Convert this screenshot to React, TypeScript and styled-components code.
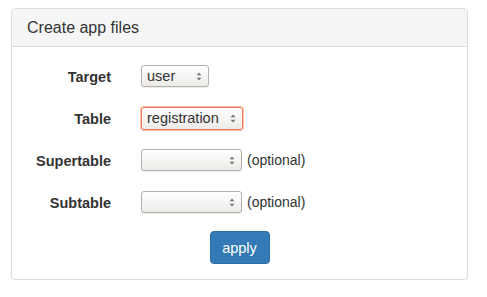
import styled, { createGlobalStyle } from "styled-components";

const GlobalStyle = createGlobalStyle`
  html, body {
    margin: 0;
    padding: 0;
    background: #fff;
  }
  body {
    font-family: "Liberation Sans", Arial, sans-serif;
    font-size: 14px;
    color: #333;
  }
`;

const Page = styled.div`
  padding: 8px 19px 0 11px;
`;

const Panel = styled.div`
  width: 457px;
  box-sizing: border-box;
  border: 1px solid #ddd;
  border-radius: 4px;
  box-shadow: 0 1px 1px rgba(0, 0, 0, 0.05);
  background: #fff;
`;

const PanelHeading = styled.div`
  height: 38px;
  box-sizing: border-box;
  padding: 9px 15px 0 15px;
  background: #f5f5f5;
  border-bottom: 1px solid #ddd;
  border-radius: 3px 3px 0 0;
  font-size: 16px;
  line-height: 20px;
  color: #333;
`;

const PanelBody = styled.div`
  padding: 8px 0 15px 0;
  display: flex;
  flex-direction: column;
`;

const Row = styled.div`
  display: grid;
  grid-template-columns: 99px auto auto;
  column-gap: 30px;
  align-items: center;
  justify-content: start;
  height: 42px;
`;

const Label = styled.label`
  font-weight: bold;
  text-align: right;
  font-size: 14.5px;
  padding-top: 2px;
`;

const Field = styled.div`
  display: flex;
  align-items: center;
  gap: 5px;
`;

const SelectBox = styled.div<{ $width: number; $focused?: boolean }>`
  width: ${(p) => p.$width}px;
  height: ${(p) => (p.$focused ? 23 : 22)}px;
  box-sizing: border-box;
  display: flex;
  align-items: center;
  justify-content: space-between;
  padding: 0 6px 0 5px;
  border: 1px solid ${(p) => (p.$focused ? "#e8774f" : "#b5b1aa")};
  border-radius: 3px;
  background: linear-gradient(#ffffff, #ecebe8);
  box-shadow: ${(p) =>
    p.$focused ? "0 0 0 1px rgba(240, 150, 110, 0.55)" : "0 1px 1px rgba(0,0,0,0.08)"};
  font-size: 14.5px;
  color: #333;
`;

const Optional = styled.span`
  font-size: 14px;
  color: #333;
`;

const ButtonRow = styled.div`
  display: flex;
  justify-content: center;
  margin-top: 8px;
`;

const Button = styled.button`
  font-family: "Liberation Sans", Arial, sans-serif;
  font-size: 14.5px;
  color: #fff;
  background: #337ab7;
  border: 1px solid #2e6da4;
  border-radius: 4px;
  width: 60px;
  height: 33px;
  padding: 0;
`;

const Arrows = () => (
  <svg width="6" height="11" viewBox="0 0 6 11">
    <path d="M0.5 4.2 L3 1.6 L5.5 4.2 Z" fill="#777" />
    <path d="M0.5 6.8 L3 9.4 L5.5 6.8 Z" fill="#777" />
  </svg>
);

const Select = ({ value, width, focused }: { value: string; width: number; focused?: boolean }) => (
  <SelectBox $width={width} $focused={focused}>
    <span>{value}</span>
    <Arrows />
  </SelectBox>
);

export default function App() {
  return (
    <Page>
      <GlobalStyle />
      <Panel>
        <PanelHeading>Create app files</PanelHeading>
        <PanelBody>
          <Row>
            <Label>Target</Label>
            <Field>
              <Select value="user" width={68} />
            </Field>
          </Row>
          <Row>
            <Label>Table</Label>
            <Field>
              <Select value="registration" width={102} focused />
            </Field>
          </Row>
          <Row>
            <Label>Supertable</Label>
            <Field>
              <Select value="" width={101} />
              <Optional>(optional)</Optional>
            </Field>
          </Row>
          <Row>
            <Label>Subtable</Label>
            <Field>
              <Select value="" width={101} />
              <Optional>(optional)</Optional>
            </Field>
          </Row>
          <ButtonRow>
            <Button>apply</Button>
          </ButtonRow>
        </PanelBody>
      </Panel>
    </Page>
  );
}
